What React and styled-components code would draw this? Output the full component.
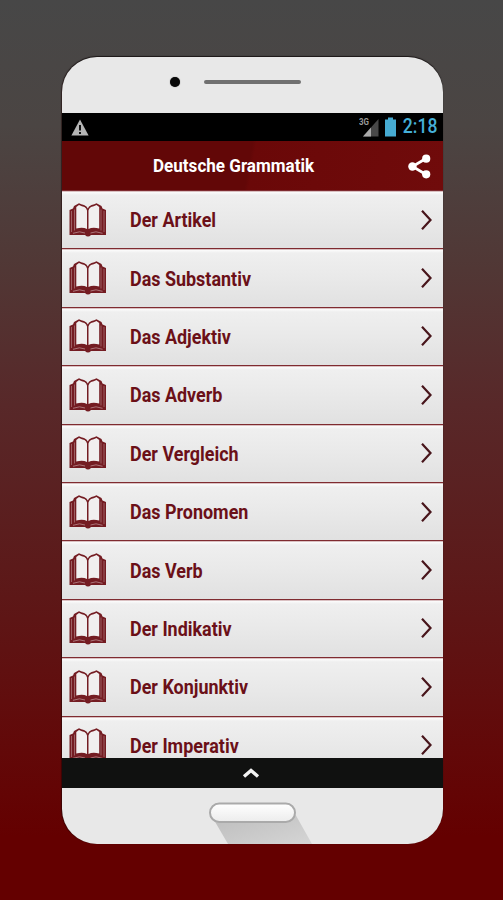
import React from 'react';
import styled, { createGlobalStyle } from 'styled-components';

const GlobalStyle = createGlobalStyle`
  * {
    box-sizing: border-box;
  }
  body {
    margin: 0;
  }
`;

const Page = styled.main`
  display: flex;
  justify-content: center;
  height: 900px;
  padding: 57px 60px 56px 62px;
  overflow: hidden;
  font-family: Roboto, 'Liberation Sans', sans-serif;
  background: linear-gradient(#474747 0%, #4b4543 14%, #513735 30%, #582829 45%, #5c1a1a 63%, #610d0d 78%, #640000 93%, #640000 100%);
`;

const Phone = styled.div`
  display: flex;
  flex-direction: column;
  width: 381px;
  height: 787px;
  overflow: hidden;
  border-radius: 35px;
  background: #e8e8e8;
  box-shadow: 0 -1px 1px #1b1717, -1px 0 1px rgba(30, 0, 0, 0.5);
`;

const Earpiece = styled.div`
  display: flex;
  align-items: center;
  flex: 0 0 56px;
  padding: 0 0 6px 108px;
  gap: 24px;
`;

const Camera = styled.div`
  width: 10px;
  height: 10px;
  border-radius: 50%;
  background: #090909;
  box-shadow: 0 0 1px #555;
`;

const Speaker = styled.div`
  width: 97px;
  height: 4px;
  border-radius: 2px;
  background: #707070;
`;

const StatusBar = styled.div`
  display: flex;
  align-items: center;
  flex: 0 0 28px;
  height: 28px;
  padding: 0 6px 0 9px;
  background: #000;
`;

const StatusIcons = styled.div`
  display: flex;
  align-items: center;
  margin-left: auto;
  gap: 6px;
`;

const Label = styled.span`
  display: block;
  white-space: nowrap;
  transform: scaleX(${(props) => props.$scale || 1});
  transform-origin: ${(props) => props.$origin || 'left'} center;
`;

const Clock = styled(Label)`
  margin-left: -3px;
  color: #45b0d8;
  font-size: 19.5px;
  font-weight: 500;
  line-height: 28px;
`;

const Header = styled.header`
  display: grid;
  grid-template-columns: 1fr 23px;
  align-items: center;
  flex: 0 0 49px;
  padding: 1px 12px 0 91px;
  color: #fff;
  font-size: 18.5px;
  font-weight: 700;
  background: linear-gradient(100deg, #620707 49%, #6a0808 50%, #700b0b);
`;

const List = styled.ul`
  flex: 0 0 568px;
  margin: 0;
  padding: 0;
  overflow: hidden;
  list-style: none;
`;

const Row = styled.li`
  display: grid;
  grid-template-columns: 61px 1fr 14px;
  align-items: center;
  height: 58.4px;
  padding: 0 9px 0 7px;
  border-top: 1px solid #7f2b30;
  color: #6b1018;
  font-size: 19.5px;
  font-weight: 700;
  background: linear-gradient(#c9a3a5 0, #fafafa 1.5px, #efefef 4px, #e9e9e9 50%, #e1e1e1 100%);

  ${Label} {
    padding-top: 2px;
  }
`;

const Drawer = styled.div`
  display: flex;
  align-items: center;
  justify-content: center;
  flex: 0 0 30px;
  padding-right: 3px;
  background: #101110;
`;

const Base = styled.footer`
  display: flex;
  flex: 1;
`;

const WarningIcon = () => (
  <svg width="18" height="17" viewBox="0 0 18 17">
    <path d="M9 .5L17.6 16.5H.4Z" fill="#b5b5b5" />
    <path d="M9 6V11.5M9 13V15" stroke="#111" strokeWidth="2" />
  </svg>
);

const SignalIcon = () => (
  <svg width="20" height="20" viewBox="0 0 20 20">
    <text x="0" y="7.5" fontSize="9" fontWeight="700" fill="#999" textLength="10" lengthAdjust="spacingAndGlyphs">3G</text>
    <path d="M19.5 2V19.5H4Z" fill="#484848" />
    <path d="M12 10.5V19.5H4Z" fill="#aaa" />
  </svg>
);

const BatteryIcon = () => (
  <svg width="11" height="20" viewBox="0 0 11 20">
    <path d="M3 .5h5v2h3v17H0V2.500h3z" fill="#46abd2" />
  </svg>
);

const ShareIcon = () => (
  <svg width="23" height="25" viewBox="0 0 23 25">
    <path d="M18 4.5L4.5 12.5L18 20.5" fill="none" stroke="#fff" strokeWidth="2.7" />
    <circle cx="18.2" cy="4.7" r="4.1" fill="#fff" />
    <circle cx="4.4" cy="12.5" r="4.2" fill="#fff" />
    <circle cx="18.2" cy="20.3" r="4.1" fill="#fff" />
  </svg>
);

const BookIcon = () => (
  <svg width="38" height="36" viewBox="0 0 38 36">
    <path d="M.5 8L4 6.5L5 4L10 1.2Q12 2.5 15 3Q18 4 18.8 6.5Q19.5 4 22.5 3Q25.5 2.5 27.5 1.2L32.5 4L33.5 6.5L37 8V33H22Q19 36 16 33H.5Z" fill="#741c22" />
    <path d="M7.3 5L10 3Q13 4.5 15.5 5Q17.5 6 18 8.5V27Q14 25 7.3 26.5ZM30.2 5L27.5 3Q24.5 4.5 22 5Q20 6 19.5 8.5V27Q23.5 25 30.2 26.5Z" fill="#f1efef" />
    <path d="M2.5 9V30M5.5 7.5V28.5M35 9V30M32 7.5V28.5" stroke="#b98d90" strokeWidth=".6" />
    <path d="M4 31.3Q11 28.5 16 31M33.5 31.3Q26.5 28.5 21.5 31" fill="none" stroke="#c39a9d" strokeWidth=".7" />
  </svg>
);

const ChevronIcon = () => (
  <svg width="14" height="22" viewBox="0 0 14 22">
    <path d="M2 1.8L10.5 11L2 20.2" fill="none" stroke="#48151b" strokeWidth="2.2" />
  </svg>
);

const DrawerIcon = () => (
  <svg width="18" height="12" viewBox="0 0 18 12">
    <path d="M2 9.5L9 3.5L16 9.5" fill="none" stroke="#f3f3f3" strokeWidth="3.4" />
  </svg>
);

const HomeButton = () => (
  <svg width="381" height="56" viewBox="0 0 381 56">
    <defs>
      <linearGradient id="shade" x1="0" y1="0" x2="1" y2="1">
        <stop offset="0" stopColor="#bcbcbc" />
        <stop offset="1" stopColor="#d5d5d5" />
      </linearGradient>
      <linearGradient id="key" x1="0" y1="0" x2="0" y2="1">
        <stop offset="0" stopColor="#fff" />
        <stop offset="1" stopColor="#ececec" />
      </linearGradient>
    </defs>
    <path d="M152 32L166 56H250L232 24Z" fill="url(#shade)" />
    <rect x="148" y="15.5" width="85" height="18.5" rx="9.2" fill="url(#key)" stroke="#aaa" strokeWidth="2" />
  </svg>
);

const topics = [
  { title: 'Der Artikel' },
  { title: 'Das Substantiv' },
  { title: 'Das Adjektiv' },
  { title: 'Das Adverb' },
  { title: 'Der Vergleich' },
  { title: 'Das Pronomen' },
  { title: 'Das Verb' },
  { title: 'Der Indikativ' },
  { title: 'Der Konjunktiv' },
  { title: 'Der Imperativ' },
];

function App() {
  return (
    <Page>
      <GlobalStyle />
      <Phone>
        <Earpiece>
          <Camera />
          <Speaker />
        </Earpiece>
        <StatusBar>
          <WarningIcon />
          <StatusIcons>
            <SignalIcon />
            <BatteryIcon />
            <Clock $scale={0.9} $origin="right">2:18</Clock>
          </StatusIcons>
        </StatusBar>
        <Header>
          <Label $scale={0.922}>Deutsche Grammatik</Label>
          <ShareIcon />
        </Header>
        <List>
          {topics.map((topic) => (
            <Row key={topic.title}>
              <BookIcon />
              <Label $scale={0.92}>{topic.title}</Label>
              <ChevronIcon />
            </Row>
          ))}
        </List>
        <Drawer>
          <DrawerIcon />
        </Drawer>
        <Base>
          <HomeButton />
        </Base>
      </Phone>
    </Page>
  );
}

export default App;
